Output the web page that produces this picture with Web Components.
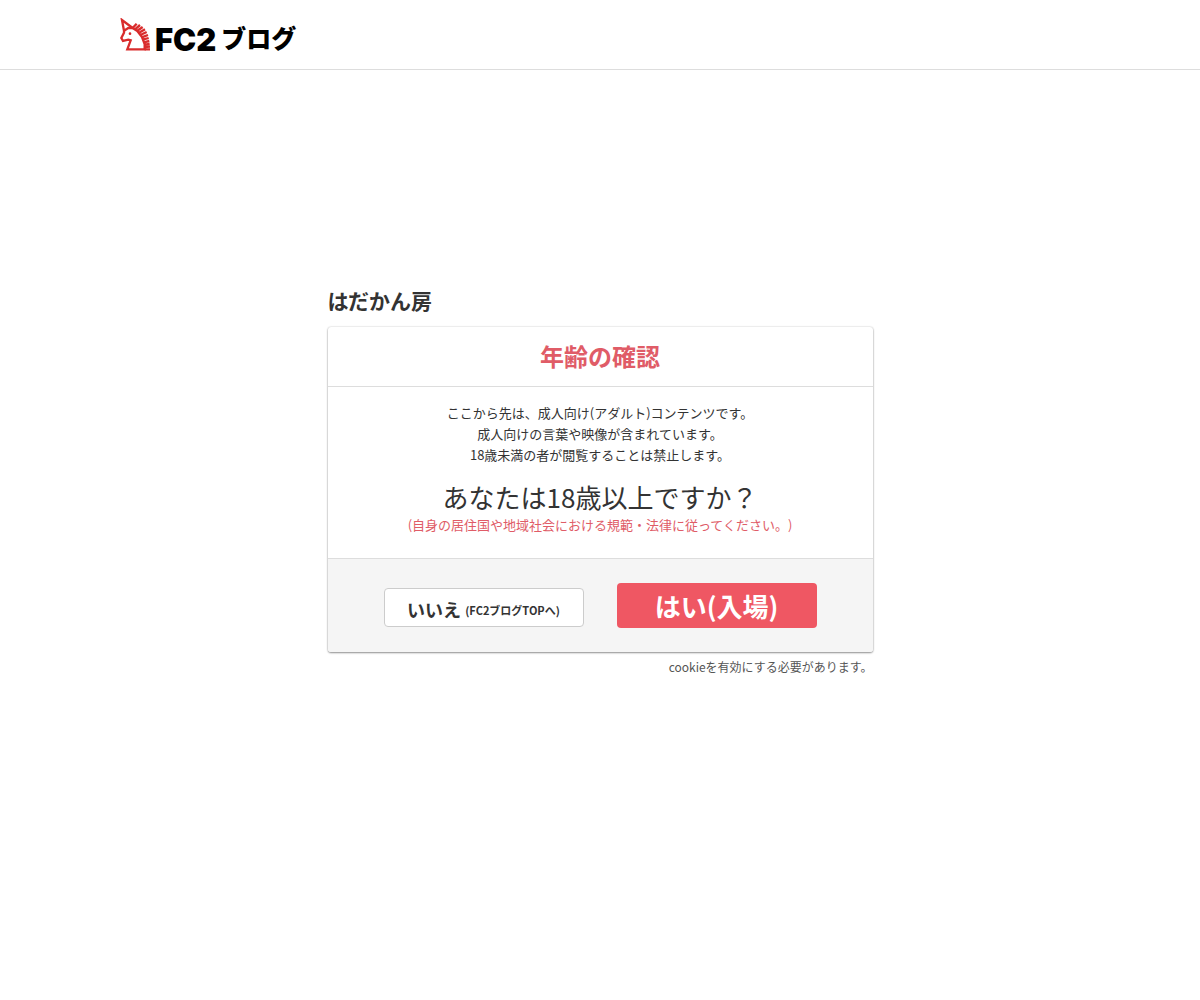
<!DOCTYPE html>
<html lang="ja">
<head>
<meta charset="utf-8">
<meta name="viewport" content="width=device-width, initial-scale=1">
<title>FC2ブログ</title>
<style>
body { margin: 0; background: #fff; color: #333; font-family: "Noto Sans CJK JP", sans-serif; font-size: 13px; line-height: 21px; text-spacing-trim: space-all; }
</style>
</head>
<body>
<age-page></age-page>
<script>
const define = (name, html) => {
  const template = document.createElement('template');
  template.innerHTML = html;
  customElements.define(name, class extends HTMLElement {
    constructor() {
      super();
      this.attachShadow({ mode: 'open' }).append(template.content.cloneNode(true));
    }
  });
};

define('blog-logo', `
<style>
:host { display: flex; }
a { display: flex; align-items: baseline; gap: 5px; color: #000; text-decoration: none; }
svg { display: block; width: 30px; height: 33px; }
.name { display: flex; align-items: flex-start; gap: 5px; }
.latin { font: 900 31px/32px Inter, sans-serif; }
.kana { font-size: 25px; line-height: 26px; font-weight: 900; }
</style>
<a href="#">
  <svg viewBox="0 0 90 99" aria-hidden="true" fill="none" stroke="#d92c2c" stroke-width="7">
    <path d="M6 6 L12 38 L12 44 L4 60 L9 69 L25 65 L32 67 L22 94 L74 94 L74 78 L66 57 L52 39 L38 30 Z"/>
    <path d="M12 38 L25 30 L38 30"/>
    <circle cx="30" cy="47" r="4" fill="#d92c2c" stroke="none"/>
    <path d="M38 30 L50 17 M45 34 L60 21 M51 39 L68 27 M56 45 L75 34 M61 51 L80 42 M65 58 L84 51 M68 65 L86 60 M71 73 L88 69 M73 80 L89 78 M74 87 L90 86 M74 94 L90 94"/>
  </svg>
  <span class="name"><span class="latin">FC2</span><span class="kana">ブログ</span></span>
</a>`);

define('site-header', `
<style>
:host { display: block; border-bottom: 1px solid #ddd; }
.inner { max-width: 960px; min-height: 51px; margin: 0 auto; padding-top: 18px; }
</style>
<header><div class="inner"><blog-logo></blog-logo></div></header>`);

define('action-link', `
<style>
:host { display: block; flex: 0 1 200px; }
a { display: block; box-sizing: border-box; border-radius: 4px; text-align: center; text-decoration: none; font-weight: 700; }
:host([kind="no"]) { margin-top: 4px; }
:host([kind="no"]) a { border: 1px solid #ccc; background: #fff; color: #333; font-size: 18px; line-height: 33px; padding-top: 4px; }
:host([kind="yes"]) a { background: #ef5763; color: #fff; font-size: 26px; line-height: 45px; }
::slotted(small) { font-size: 11px; line-height: 11px; vertical-align: 2px; }
</style>
<a href="#"><slot></slot></a>`);

define('confirm-card', `
<style>
:host { display: block; border-radius: 3px; background: #fff; box-shadow: 0 0 2px rgba(0,0,0,.2), 0 1px 2px rgba(0,0,0,.4); overflow: hidden; text-align: center; }
h2 { margin: 0; padding: 11px 12px 12px; color: #e05c67; font-size: 24px; line-height: 36px; border-bottom: 1px solid #ddd; }
.body { padding: 15px 20px 23px; }
.actions { display: flex; justify-content: center; align-items: center; gap: 33px; padding: 24px 20px; background: #f5f5f5; border-top: 1px solid #ddd; }
</style>
<h2><slot name="title"></slot></h2>
<div class="body"><slot></slot></div>
<div class="actions"><slot name="action"></slot></div>`);

define('age-page', `
<style>
:host { display: block; }
main { max-width: 545px; margin: 215px auto 0; }
h1 { margin: 0 0 12px; font-size: 21px; line-height: 30px; }
p { margin: 0; }
.question { margin-top: 15px; font-size: 26px; line-height: 34px; }
.note { color: #e05c67; }
.cookie { margin-top: 4px; color: #555; font-size: 12px; text-align: right; }
</style>
<site-header></site-header>
<main>
  <h1>はだかん房</h1>
  <confirm-card>
    <span slot="title">年齢の確認</span>
    <p>ここから先は、成人向け(アダルト)コンテンツです。<br>成人向けの言葉や映像が含まれています。<br>18歳未満の者が閲覧することは禁止します。</p>
    <p class="question">あなたは18歳以上ですか？</p>
    <p class="note">(自身の居住国や地域社会における規範・法律に従ってください。)</p>
    <action-link slot="action" kind="no">いいえ <small>(FC2ブログTOPへ)</small></action-link>
    <action-link slot="action" kind="yes">はい(入場)</action-link>
  </confirm-card>
  <p class="cookie">cookieを有効にする必要があります。</p>
</main>`);
</script>
</body>
</html>
